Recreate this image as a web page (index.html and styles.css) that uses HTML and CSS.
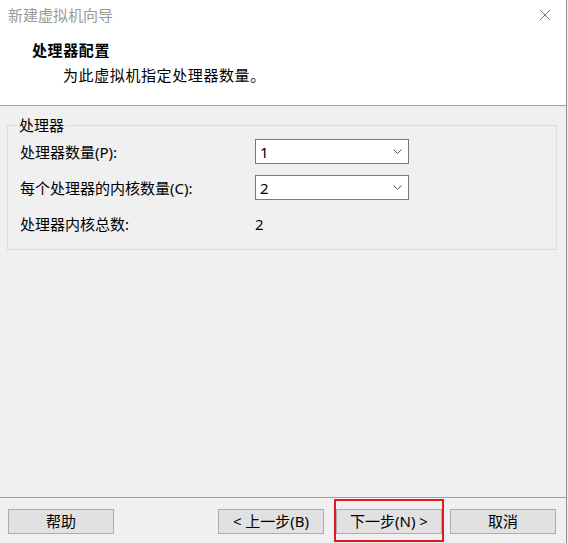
FILE: index.html
```html
<!DOCTYPE html>
<html lang="zh-CN">
<head>
<meta charset="utf-8">
<title>新建虚拟机向导</title>
<link rel="stylesheet" href="styles.css">
</head>
<body>
<div class="window">
  <div class="head">
    <div class="titlebar">
      <span class="title">新建虚拟机向导</span>
      <svg class="close" width="12" height="12" viewBox="0 0 12 12"><path d="M1 1L11 11M11 1L1 11" stroke="#7a7a7a" stroke-width="1" fill="none"/></svg>
    </div>
    <div class="heading">处理器配置</div>
    <div class="subheading">为此虚拟机指定处理器数量。</div>
  </div>
  <div class="content">
    <fieldset class="group">
      <legend>处理器</legend>
      <div class="row">
        <span class="label">处理器数量(P):</span>
        <div class="select"><span>1</span><svg width="9" height="5" viewBox="0 0 9 5"><path d="M0.5 0.5L4.5 4.5L8.5 0.5" stroke="#555" fill="none"/></svg></div>
      </div>
      <div class="row">
        <span class="label">每个处理器的内核数量(C):</span>
        <div class="select"><span>2</span><svg width="9" height="5" viewBox="0 0 9 5"><path d="M0.5 0.5L4.5 4.5L8.5 0.5" stroke="#555" fill="none"/></svg></div>
      </div>
      <div class="row">
        <span class="label">处理器内核总数:</span>
        <span class="value">2</span>
      </div>
    </fieldset>
  </div>
  <div class="footer">
    <button class="btn btn-help">帮助</button>
    <button class="btn">&lt; 上一步(B)</button>
    <button class="btn btn-next">下一步(N) &gt;</button>
    <button class="btn">取消</button>
  </div>
</div>
</body>
</html>
```

FILE: styles.css
```css
html, body {
  margin: 0;
  padding: 0;
}
body {
  width: 568px;
  height: 543px;
  background: #f0f0f0;
  font-family: "Noto Sans", "Noto Sans CJK SC", sans-serif;
  font-size: 15px;
  color: #000;
  overflow: hidden;
}
.window {
  width: 566px;
  height: 543px;
  border-right: 1px solid #8c8c8c;
  background: #f0f0f0;
  display: flex;
  flex-direction: column;
}
.head {
  background: #fff;
  height: 105px;
  border-bottom: 1px solid #a0a0a0;
  flex: none;
}
.titlebar {
  height: 30px;
  display: flex;
  align-items: center;
  justify-content: space-between;
  padding: 0 15px 0 8px;
}
.title {
  color: #9a9a9a;
  font-size: 15px;
  line-height: 30px;
}
.close {
  display: block;
}
.heading {
  margin: 10px 0 0 32px;
  line-height: 20px;
  font-weight: bold;
  font-size: 15px;
  letter-spacing: 0.6px;
}
.subheading {
  margin: 5px 0 0 63px;
  line-height: 20px;
  letter-spacing: 0.6px;
}
.content {
  flex: none;
  height: 391px;
  padding: 9px 0 0 7px;
  box-sizing: border-box;
}
.group {
  margin: 0;
  width: 550px;
  box-sizing: border-box;
  border: 1px solid #dcdcdc;
  padding: 4px 12px 13px 12px;
  display: flex;
  flex-direction: column;
  gap: 11px;
}
.group legend {
  padding: 0 2px;
  margin-left: -3px;
  line-height: 20px;
}
.row {
  display: flex;
  align-items: center;
  height: 25px;
}
.label {
  width: 235px;
  flex: none;
}
.select {
  width: 154px;
  height: 25px;
  box-sizing: border-box;
  border: 1px solid #7a7a7a;
  background: #fff;
  display: flex;
  align-items: center;
  justify-content: space-between;
  padding: 0 6px 0 4px;
}
.value {
  display: block;
}
.footer {
  flex: none;
  border-top: 1px solid #a0a0a0;
  display: flex;
  align-items: flex-start;
  padding: 11px 10px 0 8px;
}
.btn {
  width: 106px;
  height: 25px;
  box-sizing: border-box;
  border: 1px solid #adadad;
  background: #e1e1e1;
  font-family: "Noto Sans", "Noto Sans CJK SC", sans-serif;
  font-size: 15px;
  color: #000;
  padding: 0;
  line-height: 23px;
  margin-left: 12px;
}
.btn-help {
  margin-left: 0;
  margin-right: auto;
}
.btn:last-child {
  margin-left: 8px;
}
.btn-next {
  position: relative;
}
.btn-next::after {
  content: "";
  position: absolute;
  left: -3px;
  right: -3px;
  top: -11px;
  bottom: -9px;
  border: 2px solid #e0191e;
}
```
